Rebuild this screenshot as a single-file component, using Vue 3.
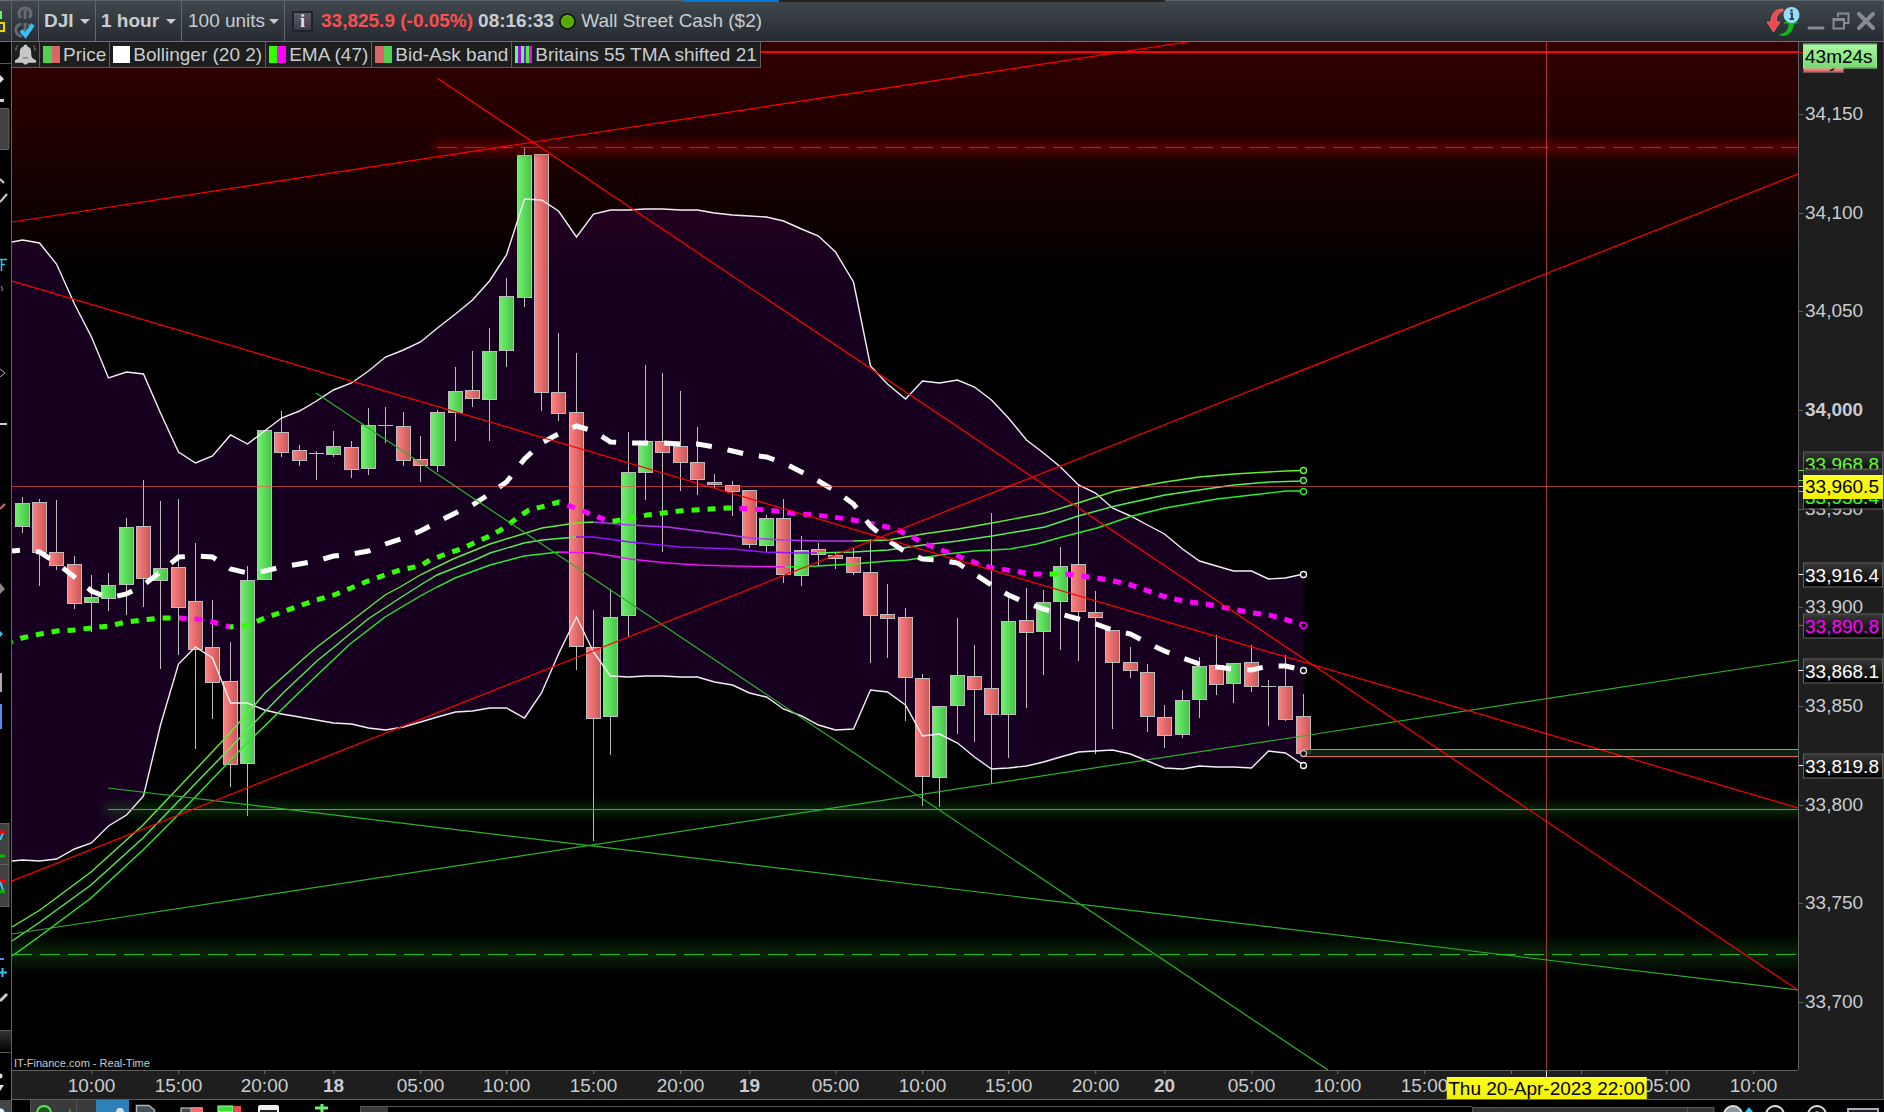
<script setup>
// Plot space: x 12..1798, y 42..1070
const PLOT = { x: 12, y: 42, w: 1786, h: 1028 }
const barX = (i) => Math.round(22.3 + 17.31 * i - 0.5) + 0.5
const priceY = (p) => 410 + (34000 - p) * 1.9733
const topPct = (y) => ((y - PLOT.y) / PLOT.h) * 100 + '%'
const leftPct = (x) => ((x - PLOT.x) / PLOT.w) * 100 + '%'

// direction, body top, body bottom, wick top, wick bottom
const raw = `u 503 526 497 533|d 502 552 499 586|d 552 565 500 570|d 564 603 556 609|u 597 602 575 632|u 585 598 573 611|u 527 584 518 615|d 526 578 480 607|u 568 580 501 669|d 567 607 499 655|d 601 649 543 749|d 647 682 600 719|d 681 764 642 787|u 580 763 566 816|u 430 579 430 579|d 432 452 411 457|d 450 460 445 466|n 453 453 451 480|u 446 454 431 457|d 447 469 441 478|u 425 468 408 475|n 425 425 407 443|d 426 460 412 466|d 459 465 436 482|u 412 465 410 472|u 391 412 367 441|d 390 398 351 407|u 351 399 328 441|u 296 350 278 367|u 155 297 148 307|d 154 392 154 411|d 392 413 333 421|d 412 646 353 670|d 647 718 610 841|u 617 716 589 755|u 472 615 432 637|u 441 472 365 500|d 441 452 373 552|d 446 462 391 491|d 462 479 427 495|d 482 484 474 488|d 485 491 481 516|d 490 544 490 548|u 518 545 515 552|d 518 574 499 583|u 550 575 536 586|d 549 554 543 566|d 555 558 553 569|d 557 572 548 575|d 572 615 539 663|d 614 618 584 658|d 617 677 608 721|d 678 776 674 806|u 706 777 706 807|u 675 705 618 734|d 676 689 645 742|d 688 714 513 784|u 621 714 597 758|d 620 632 588 708|u 602 631 590 675|u 566 601 547 650|d 564 611 485 661|d 612 617 591 754|d 630 662 630 729|d 662 670 647 678|d 672 716 664 732|d 717 735 705 748|u 700 734 690 738|u 666 699 657 718|d 665 684 635 695|u 663 683 663 703|d 662 686 645 692|n 686 686 680 726|d 686 719 655 721|d 716 753 694 754`
const candles = raw.split('|').map((row, i) => {
  const [dir, ...v] = row.split(' ')
  const [o, c, hi, lo] = v.map(Number)
  return { x: barX(i), dir, o: o + 0.5, c: c + 0.5, hi, lo }
})

const upper = [240,243,264,304,337,378,372,374,413,452,463,456,435,444,431,418,411,401,390,383,371,357,350,342,328,314,300,281,255,199,200,211,237,214,210,210,209,209,210,210,213,215,216,217,221,229,236,252,282,366,384,399,381,383,380,387,400,418,440,453,467,485,493,508,516,525,534,549,561,566,571,571,579,578,574]
const lower = [860,861,859,849,843,826,815,796,725,664,647,658,703,703,710,714,717,720,723,724,728,730,727,722,717,712,711,708,708,718,693,654,617,652,676,677,676,676,677,677,682,685,693,697,709,716,725,730,729,690,692,705,736,734,743,757,769,768,766,762,757,752,751,750,754,761,768,769,766,767,767,768,751,753,765]
const middle = [550,552,563,577,591,598,594,585,572,557,556,557,569,573,571,567,564,561,556,554,551,544,538,531,522,513,505,494,482,459,443,434,426,431,442,443,443,443,444,444,447,451,455,457,463,472,481,491,504,526,540,552,559,560,563,574,585,595,603,609,614,619,624,630,634,643,651,658,664,667,669,670,666,666,670]
const series = (arr, first) => `12,${first} ` + arr.map((y, i) => `${barX(i)},${y}`).join(' ')
const upperPts = series(upper, 242)
const lowerPts = series(lower, 861)
const middlePts = series(middle, 551)
const bandPts = upperPts + ' ' + lowerPts.split(' ').reverse().join(' ')

const emaPts = '12,642 22,638 40,634 57,631 74,630 91,628 109,626 126,622 143,620 161,618 179,618 196,619 213,622 230,627 248,625 265,618 282,612 299,606 316,600 334,595 351,588 368,581 385,575 400,570 420,566 430,560 446,554 461,549 476,542 490,536 504,528 517,518 529,510 545,506 559,502 578,509 593,515 608,521 615,521 631,518 647,515 663,513 679,511 694,510 711,509 727,508 737,508 752,509 768,510 784,512 800,514 816,515 832,517 848,519 863,522 879,525 895,529 909,535 923,543 938,549 953,554 968,560 984,566 999,569 1015,571 1031,574 1048,574 1066,574 1081,576 1097,578 1113,581 1128,584 1143,589 1159,595 1174,599 1190,602 1206,604 1222,607 1237,610 1253,613 1269,615 1284,619 1303,625'

const bands = [
  { id: 'a', pts: '12,927 40,910 91,872 143,825 198,767 230,733 265,693 302,660 317,647 350,622 385,595 400,587 422,574 453,559 490,544 542,528 576,523 593,522 630,525 667,527 715,533 750,538 783,540 817,541 853,541 888,540 923,534 958,529 992,523 1045,513 1078,503 1115,491 1165,482 1199,477 1234,474 1286,471 1303,470.5' },
  { id: 'b', pts: '12,941 40,922 91,885 143,838 196,783 230,748 283,693 318,660 333,648 368,619 400,598 422,584 437,575 477,559 490,553 524,543 542,540 576,537 593,537 630,542 680,547 733,549 763,552 800,553 817,553 853,552 888,550 923,545 958,541 992,536 1045,527 1078,516 1115,506 1165,495 1199,490 1234,485 1269,482 1303,481' },
  { id: 'c', pts: '12,956 40,936 91,898 143,850 177,816 245,745 312,680 350,644 385,617 400,608 422,595 437,587 455,578 490,565 524,556 559,552 593,553 613,556 630,559 667,563 698,565 733,566 785,567 817,566 853,564 888,561 907,560 947,554 974,551 992,550 1010,549 1037,544 1062,537 1097,528 1132,516 1165,508 1217,499 1269,493 1286,491 1303,491' },
]
// hard colour changes along x, as [x, colour before, colour after]
const gradients = [
  { id: 'stroke-a', steps: [[593, '#62f02e', '#b038f0'], [853, '#b038f0', '#62f02e']] },
  { id: 'stroke-b', steps: [[576, '#50f050', '#9010ff'], [817, '#9010ff', '#50f050']] },
  { id: 'stroke-c', steps: [[559, '#28ee28', '#f010f8'], [785, '#f010f8', '#28ee28']] },
  { id: 'stroke-ema', steps: [[179, '#33ff00', '#ff00ff'], [230, '#ff00ff', '#33ff00'], [559, '#33ff00', '#ff00ff'], [611, '#ff00ff', '#33ff00'], [732, '#33ff00', '#ff00ff'], [1044, '#ff00ff', '#33ff00'], [1060, '#33ff00', '#ff00ff']] },
]
const stopAt = (x) => (x - PLOT.x) / PLOT.w

const markers = [
  { y: 470.5, c: '#66ff33' }, { y: 480.5, c: '#55f055' }, { y: 491.5, c: '#28ee28' }, { y: 574.5, c: '#fff' },
  { y: 625.5, c: '#ff00ff' }, { y: 670.5, c: '#fff' }, { y: 753.5, c: '#bbb' }, { y: 765.5, c: '#fff' },
]

const scale = [34150, 34100, 34050, 34000, 33950, 33900, 33850, 33800, 33750, 33700].map((p) => ({
  text: p.toLocaleString('en-US'), y: priceY(p), major: p === 34000,
}))
const tags = [
  { text: '33,968.8', y: 464, tick: 470, c: '#66ff33' },
  { text: '33,958.4', y: 497, tick: 491, c: '#33ff33' },
  { text: '', y: 481, tick: 480, c: '#55f055' },
  { text: '33,916.4', y: 575, tick: 574, c: '#fff' },
  { text: '33,890.8', y: 626, tick: 625, c: '#ff00ff' },
  { text: '33,868.1', y: 671, tick: 670, c: '#fff' },
  { text: '33,819.8', y: 766, tick: 765, c: '#fff' },
]
const hours = [[4, '10:00'], [9, '15:00'], [14, '20:00'], [18, '18'], [23, '05:00'], [28, '10:00'], [33, '15:00'], [38, '20:00'], [42, '19'], [47, '05:00'], [52, '10:00'], [57, '15:00'], [62, '20:00'], [66, '20'], [71, '05:00'], [76, '10:00'], [81, '15:00'], [86, ''], [90, ''], [95, '05:00'], [100, '10:00']]
  .map(([i, text]) => ({ x: barX(i), text, day: text.length === 2 }))

const legend = [
  { text: 'Price', sw: 'price' }, { text: 'Bollinger (20 2)', sw: 'boll' }, { text: 'EMA (47)', sw: 'ema' },
  { text: 'Bid-Ask band', sw: 'bidask' }, { text: 'Britains 55 TMA shifted 21', sw: 'tma' },
]
</script>

<template>
  <div class="shell">
    <aside class="rail" aria-label="Drawing tools">
      <svg viewBox="0 0 12 1112" width="12" height="1112" aria-hidden="true">
        <defs>
          <linearGradient id="railTop" x2="0" y2="1"><stop stop-color="#40484e" /><stop offset="1" stop-color="#252b30" /></linearGradient>
          <linearGradient id="railLow" x2="0" y2="1"><stop stop-color="#333" /><stop offset="1" stop-color="#000" /></linearGradient>
        </defs>
        <rect width="12" height="41" fill="url(#railTop)" />
        <path d="M0 .5H12M0 41.5H12" stroke="#6a7075" />
        <rect y="11" width="2" height="8" fill="#6cf06c" /><rect y="19" width="7" height="14" fill="#343a3f" />
        <path d="M0 23H4V31H0" fill="none" stroke="#e8d800" stroke-width="2" />
        <path d="M0 63.500H12M0 1030.500H12M0 1052.500H12" stroke="#555" />
        <path d="M0 75L4 79L0 83Z" fill="#ddd" /><rect y="99" width="4" height="3" fill="#ccc" />
        <rect x="-2" y="108.500" width="11" height="41" rx="1" fill="#424242" stroke="#606060" />
        <path d="M0 179L4 183M0 202L7 194" stroke="#ccc" stroke-width="2" />
        <path d="M0 259.500H7M1.500 259V271M1 264.500H5" fill="none" stroke="#3bc0f0" stroke-width="1.500" />
        <path d="M1 286Q3 288 2 291M0 369L5 373L0 377" fill="none" stroke="#aaa" />
        <path d="M0 424H7" stroke="#ccc" stroke-width="2" /><path d="M0 509L5 504" stroke="#e06060" stroke-width="2" />
        <path d="M0 583L5 589L0 594Z" fill="#888" /><path d="M0 631L3 634L0 637Z" fill="#3bc0f0" />
        <rect y="673" width="2" height="19" fill="#aaa" /><rect y="704" width="2" height="25" fill="#5a8ae8" />
        <rect x="-2" y="823.500" width="11" height="41" fill="#424242" stroke="#606060" />
        <rect x="-2" y="864.500" width="11" height="42" fill="#424242" stroke="#606060" />
        <path d="M0 840L3 833M0 881L3 890" stroke="#3bc0f0" stroke-width="2" />
        <path d="M0 832H5M0 880L5 882" stroke="#f00" stroke-width="3" /><path d="M0 856H5M0 892L5 891" stroke="#0b0" stroke-width="3" />
        <path d="M0 959H4" stroke="#5a8ae8" stroke-width="2" /><path d="M2.500 968V977M0 972.500H7" stroke="#3bc0f0" stroke-width="2" />
        <path d="M0 1001L7 994" stroke="#ccc" stroke-width="3" />
        <rect y="1031" width="12" height="21" fill="url(#railLow)" />
        <circle cy="1076" r="2.500" fill="#ddd" /><path d="M0 1085H4L0 1091Z" fill="#ddd" />
        <rect y="1100" width="12" height="12" fill="#444" /><circle cy="1113" r="5" fill="#fff" stroke="#268" stroke-width="1" />
      </svg>
    </aside>

    <div class="window">
      <header class="bar">
        <span class="cell link" aria-hidden="true">
          <svg viewBox="0 0 26 40" width="26" height="40">
            <path d="M9 16.500A6 5.500 0 1 1 17 16.500M13 9V18" fill="none" stroke="#666b6f" stroke-width="3" />
            <path d="M9.500 23A6 6 0 0 0 10 35M16 23.500A6 6 0 0 1 18 25M13 22V31" fill="none" stroke="#666b6f" stroke-width="3" />
            <path d="M9 29.500L13.500 34.500L21 23.500" fill="none" stroke="#35c3f8" stroke-width="4" />
          </svg>
        </span>
        <label class="cell pick symbol"><select aria-label="Instrument"><option>DJI</option></select><i class="caret" /></label>
        <label class="cell pick frame"><select aria-label="Timeframe"><option>1 hour</option></select><i class="caret" /></label>
        <label class="cell pick units"><select aria-label="History"><option>100 units</option></select><i class="caret" /></label>
        <div class="quote">
          <button class="info" type="button" aria-label="Information">i</button>
          <b class="down">33,825.9 (-0.05%)</b>
          <b>08:16:33</b>
          <i class="live" />
          <span>Wall Street Cash ($2)</span>
        </div>
        <div class="controls">
          <button type="button" aria-label="Refresh">
            <svg viewBox="0 0 34 34" width="34" height="34">
              <path d="M17 5C9 5 5 10 5 18H1L7.500 28L14 18H10.500C10 12 12 9 17 7Z" fill="#f04848" stroke="#ff8080" stroke-width=".7" />
              <path d="M12 30.500C18 34 27 31 28 19.500H31.500V18H18V19.500H22.500C23 26 19 30 12 30.500Z" fill="#10b818" />
              <circle cx="25.500" cy="11" r="8" fill="#9adcf8" /><path d="M24 9.500H26V15M23.500 15H28" fill="none" stroke="#345" stroke-width="2" /><circle cx="25.500" cy="6.500" r="1.300" fill="#345" />
            </svg>
          </button>
          <button type="button" aria-label="Minimise"><svg viewBox="0 0 18 18" width="18" height="18"><path d="M2 16H16" stroke="#858b90" stroke-width="3" stroke-linecap="round" /></svg></button>
          <button type="button" aria-label="Restore"><svg viewBox="0 0 18 18" width="18" height="18"><path d="M6 5V1.500H16.500V11H13M1.500 7H12V16.500H1.500ZM1.500 8H12" fill="none" stroke="#858b90" stroke-width="2" /></svg></button>
          <button type="button" aria-label="Close"><svg viewBox="0 0 18 18" width="18" height="18"><path d="M2 2L16 16M16 2L2 16" stroke="#858b90" stroke-width="4" stroke-linecap="round" /></svg></button>
        </div>
        <i class="progress" />
      </header>

      <main class="board">
        <section class="plot">
          <svg class="chart" viewBox="12 42 1786 1028" preserveAspectRatio="none" role="img" aria-label="DJI hourly candles">
            <defs>
              <linearGradient id="sky" x2="0" y2="1"><stop stop-color="#320000" /><stop offset=".5" stop-color="#1c0000" /><stop offset="1" stop-color="#000" /></linearGradient>
              <linearGradient id="up"><stop stop-color="#70f070" /><stop offset="1" stop-color="#48c448" /></linearGradient>
              <linearGradient id="dn"><stop stop-color="#fb8282" /><stop offset="1" stop-color="#cc5757" /></linearGradient>
              <linearGradient id="redGlow" x2="0" y2="1"><stop stop-color="#c00000" stop-opacity="0" /><stop offset=".5" stop-color="#c00000" stop-opacity=".34" /><stop offset="1" stop-color="#c00000" stop-opacity="0" /></linearGradient>
              <linearGradient id="greenGlow" x2="0" y2="1"><stop stop-color="#28a028" stop-opacity="0" /><stop offset=".5" stop-color="#28a028" stop-opacity=".22" /><stop offset="1" stop-color="#28a028" stop-opacity="0" /></linearGradient>
              <linearGradient id="fadeIn" gradientUnits="userSpaceOnUse" x1="426" y1="0" x2="440" y2="0"><stop stop-color="#000" /><stop offset="1" stop-color="#fff" /></linearGradient>
              <linearGradient id="fadeInLow" gradientUnits="userSpaceOnUse" x1="98" y1="0" x2="112" y2="0"><stop stop-color="#000" /><stop offset="1" stop-color="#fff" /></linearGradient>
              <mask id="soft"><rect x="426" y="130" width="1372" height="34" fill="url(#fadeIn)" /></mask>
              <mask id="softLow"><rect x="98" y="790" width="1700" height="40" fill="url(#fadeInLow)" /></mask>
              <linearGradient v-for="g in gradients" :id="g.id" :key="g.id" gradientUnits="userSpaceOnUse" x1="12" y1="0" x2="1798" y2="0">
                <template v-for="s in g.steps" :key="s[0]">
                  <stop :offset="stopAt(s[0])" :stop-color="s[1]" />
                  <stop :offset="stopAt(s[0])" :stop-color="s[2]" />
                </template>
              </linearGradient>
            </defs>
            <rect x="12" y="42" width="1786" height="235" fill="url(#sky)" />
            <polygon :points="bandPts" fill="#9000be" fill-opacity=".16" />

            <g v-for="(k, i) in candles" :key="i" stroke="#bdbdbd">
              <line :x1="k.x" :x2="k.x" :y1="k.hi" :y2="k.lo" />
              <line v-if="k.dir === 'n'" :x1="k.x - 7.5" :x2="k.x + 7.5" :y1="k.o" :y2="k.o" />
              <rect v-else :x="k.x - 7" :y="k.o" width="14" :height="k.c - k.o" :fill="k.dir === 'u' ? 'url(#up)' : 'url(#dn)'" />
            </g>

            <rect x="426" y="135" width="1372" height="25" fill="url(#redGlow)" mask="url(#soft)" />
            <rect x="98" y="797" width="1700" height="25" fill="url(#greenGlow)" mask="url(#softLow)" />
            <rect x="12" y="934" width="1786" height="40" fill="url(#greenGlow)" />
            <rect x="1303" y="749" width="495" height="8" fill="#0c2c10" fill-opacity=".8" />

            <g fill="none">
              <g stroke="#f4eef6" stroke-width="1.4"><polyline :points="upperPts" /><polyline :points="lowerPts" /></g>
              <polyline v-for="b in bands" :key="b.id" :points="b.pts" :stroke="`url(#stroke-${b.id})`" stroke-width="1.4" />
              <polyline :points="emaPts" stroke="url(#stroke-ema)" stroke-width="5" stroke-dasharray="8 8" stroke-dashoffset="7" />
              <polyline :points="middlePts" stroke="#fff" stroke-width="5" stroke-dasharray="16 16" stroke-dashoffset="8" />
              <g stroke="#2cb02c">
                <path d="M316 393L1328 1070M108 788L1798 990M12 934L1798 660" stroke-width="1.2" />
                <path d="M108 809.500H1798M12 954.500" stroke="#2fb82f" /><path d="M12 954.500H1798" stroke="#2fb82f" stroke-dasharray="20 8" />
              </g>
              <g stroke="#ff0000">
                <path d="M12 222L1187 42M437 78L1798 990M12 281L1798 808M12 881L1798 174" stroke-width="1.2" />
                <path d="M437 147.500H1798" stroke-dasharray="20 8" /><path d="M12 52H1798" stroke-width="2" />
              </g>
              <path d="M1303 749.500H1798" stroke="#4ccc4c" /><path d="M1303 756.500H1798" stroke="#e06464" />
              <path d="M12 486.500H1798M1546.500 42V1070" stroke="#f05050" stroke-opacity=".65" />
            </g>
            <circle v-for="m in markers" :key="m.y" cx="1303.500" :cy="m.y" r="3" fill="#000" :stroke="m.c" stroke-width="1.300" />
          </svg>

          <div class="legend">
            <button class="item bell" type="button" aria-label="Alerts">
              <svg viewBox="0 0 24 24" width="24" height="24"><path d="M12 1C13 1 14 2 14 3C18 4 18 8 18 11C18 15 20 16 23 17.500V20H15L13 22H11L9 20H1V17.500C4 16 6 15 6 11C6 8 6 4 10 3C10 2 11 1 12 1Z" fill="#c8c8c8" /><path d="M9 15H15" stroke="#666" /><path d="M2 7Q2 4 4 2M22 7Q22 4 20 2" fill="none" stroke="#bbb" stroke-dasharray="2 1" /></svg>
            </button>
            <span v-for="l in legend" :key="l.text" class="item"><i class="swatch" :class="l.sw" />{{ l.text }}</span>
          </div>
          <small class="credit">IT-Finance.com - Real-Time</small>
        </section>

        <aside class="prices">
          <span v-for="s in scale" :key="s.text" class="level" :class="{ major: s.major }" :style="{ top: topPct(s.y) }">{{ s.text }}</span>
          <template v-for="t in tags" :key="t.y">
            <i class="notch" :style="{ top: topPct(t.tick), background: t.c }" />
            <span class="tag" :style="{ top: topPct(t.y), color: t.c }">{{ t.text }}</span>
          </template>
          <i class="notch" :style="{ top: topPct(486) }" />
          <span class="tag cursor" :style="{ top: topPct(487) }">33,960.5</span>
          <i class="notch resist" :style="{ top: topPct(52) }" />
          <span class="tag day" :style="{ top: topPct(60) }">Day</span>
          <span class="tag timer" :style="{ top: topPct(56) }">43m24s</span>
        </aside>

        <div class="times">
          <span v-for="h in hours" :key="h.x" class="hour" :class="{ major: h.day }" :style="{ left: leftPct(h.x) }">{{ h.text }}</span>
          <i class="stem" :style="{ left: leftPct(1546) }" />
          <span class="when" :style="{ left: leftPct(1546.5) }">Thu 20-Apr-2023 22:00</span>
        </div>
        <div class="corner" />
      </main>

      <footer class="dock" aria-hidden="true">
        <svg class="tools" viewBox="12 1100 480 12" width="480" height="12">
          <rect x="30" y="1100" width="66" height="12" fill="#3a3a3a" /><path d="M30.500 1100V1112M76.500 1100V1112" stroke="#555" />
          <circle cx="44" cy="1113" r="7" fill="#155a15" stroke="#5fe05f" stroke-width="2" /><path d="M70 1109V1112" stroke="#3c3" />
          <rect x="96" y="1100" width="33" height="12" fill="#2c82b8" /><circle cx="120" cy="1112" r="4" fill="#ddd" />
          <path d="M136.500 1113V1105.500H149L154.500 1110V1113" fill="#465058" stroke="#aab4bc" stroke-width="1.500" />
          <rect x="181" y="1108" width="10" height="5" fill="#444" stroke="#ddd" /><rect x="191" y="1107" width="12" height="5" fill="#f07070" />
          <rect x="218" y="1106" width="15" height="6" fill="#38e038" stroke="#aaffaa" /><rect x="234" y="1106" width="7" height="6" fill="#e05050" />
          <path d="M258 1112V1107Q258 1105 260 1105H277Q279 1105 279 1107V1112Z" fill="#eee" /><rect x="260" y="1110" width="17" height="3" fill="#222" />
          <path d="M315 1108H328M322 1104V1112" stroke="#6cf06c" stroke-width="3" />
          <rect x="360" y="1106" width="28" height="6" fill="#3a3a3a" /><path d="M360.500 1112V1106.500H492" fill="none" stroke="#555" />
        </svg>
        <i class="track" />
        <svg class="zooms" viewBox="1472 1100 412 12" width="412" height="12">
          <path d="M1472.500 1112V1107.500H1714V1112M1687.500 1107V1112" fill="#333" stroke="#555" />
          <circle cx="1733" cy="1115" r="9" fill="#8c949a" stroke="#ddd" stroke-width="2" /><path d="M1745 1112L1749 1107L1753 1112Z" fill="#3bc0f0" />
          <circle cx="1775" cy="1115" r="9" fill="#111" stroke="#ddd" stroke-width="2" /><circle cx="1817" cy="1115" r="9" fill="#111" stroke="#ddd" stroke-width="2" /><circle cx="1817" cy="1113" r="2" fill="#3bc0f0" />
          <path d="M1848 1112V1109H1878V1112" fill="#222" stroke="#aab" stroke-width="2" />
        </svg>
      </footer>
    </div>
  </div>
</template>

<style>
html, body { background: #000; }
</style>

<style scoped>
* { box-sizing: border-box; }
.shell {
  display: flex;
  min-height: 100vh;
  overflow: hidden;
  color: #c8ccd0;
  background: #000;
  font: 19px/24px "Liberation Sans", Arial, sans-serif;
}
button { padding: 0; border: 0; background: none; color: inherit; font: inherit; }
svg { display: block; }
.rail { flex: none; width: 12px; height: 100vh; overflow: hidden; border-right: 1px solid #606468; }
.window { flex: 1; min-width: 0; display: flex; flex-direction: column; }

.bar {
  position: relative;
  display: flex;
  height: 42px;
  border-top: 1px solid #5d656c;
  border-bottom: 1px solid #6a7075;
  border-right: 1px solid #555;
  background: linear-gradient(#40484e, #252b30);
}
.cell { display: flex; align-items: center; border-right: 1px solid #61676c; }
.link { width: 27px; }
.pick { position: relative; }
.pick select {
  appearance: none;
  width: 100%;
  height: 40px;
  padding: 0 0 0 5px;
  border: 0;
  background: none;
  color: inherit;
  font: inherit;
}
.symbol { width: 57px; }
.frame { width: 86px; }
.units { width: 103px; }
.pick.units select { padding-left: 6px; }
.symbol select, .frame select { font-weight: bold; }
.caret {
  position: absolute;
  right: 5px;
  top: 18px;
  border: 5px solid transparent;
  border-top-color: #c8ccd0;
  border-bottom: 0;
  pointer-events: none;
}
.quote { display: flex; align-items: center; gap: 5px; padding-left: 7px; white-space: nowrap; }
.down { color: #f85050; }
.info {
  width: 21px;
  height: 21px;
  margin-right: 3px;
  border: 2px solid #22222c;
  background: linear-gradient(#5c5c68, #3c3c48);
  color: #e4e4e4;
  font: bold 18px/16px "Liberation Serif", serif;
}
.live { width: 17px; height: 17px; border: 2px solid #15200c; border-radius: 50%; background: #55a800; box-shadow: inset 0 0 0 1px #78cc20; }
.controls { display: flex; align-items: center; gap: 7px; margin-left: auto; padding-right: 8px; }
.progress { position: absolute; top: -1px; left: 671px; width: 482px; height: 2px; background: linear-gradient(90deg, #0078d7 96px, #222 96px); }

.board { flex: 1; display: grid; grid-template-columns: minmax(0, 1fr) 86px; grid-template-rows: minmax(0, 1fr) 30px; }
.plot { position: relative; overflow: hidden; background: #000; }
.chart { position: absolute; width: 100%; height: 100%; }
.legend { position: relative; display: flex; width: max-content; height: 26px; background: #1e1e1e; border-bottom: 1px solid #606060; }
.item { display: flex; align-items: center; gap: 3px; padding: 0 3px; border-right: 1px solid #606060; white-space: nowrap; }
.bell { width: 28px; padding: 0 2px; }
.swatch { width: 17px; height: 17px; background: #fff; }
.price { background: linear-gradient(90deg, #50d050 50%, #dc6464 50%); }
.ema { background: linear-gradient(90deg, #33ff00 50%, #ff00ff 50%); }
.bidask { background: linear-gradient(90deg, #dc6464 50%, #50d050 50%); }
.tma { background: linear-gradient(90deg, #66ff66 3px, #a000ff 3px 6px, #66ff33 6px 9px, #8a10f8 9px 11px, #33ff33 11px 14px, #ff00ff 14px); }
.credit { position: absolute; left: 2px; bottom: 0; font-size: 11px; line-height: 13px; }

.prices { position: relative; border-left: 1px solid #606060; border-right: 1px solid #444; background: #1e1e1e; }
.level, .tag { position: absolute; transform: translateY(-50%); }
.level { left: 6px; }
.level::before { content: ""; position: absolute; left: -6px; top: 12px; width: 4px; height: 1px; background: #606060; }
.major { font-weight: bold; }
.tag {
  left: 4px;
  width: 80px;
  height: 25px;
  padding-left: 1px;
  border: 1px solid #606060;
  background: linear-gradient(#383838, #000);
}
.notch { position: absolute; left: 0; width: 4px; height: 1px; background: #ddd; }
.resist { background: #f00; }
.cursor { height: 24px; border: 0; padding-left: 2px; background: linear-gradient(#ffff20, #f0f000); color: #000; }
.day { width: 41px; background: #f07878; color: #000; }
.timer { width: 74px; border-color: #90e890; background: linear-gradient(#a8f8a0, #78d870); color: #000; }

.times { position: relative; overflow: hidden; border-top: 1px solid #606060; border-bottom: 1px solid #606060; background: #1e1e1e; }
.hour { position: absolute; top: 3px; transform: translateX(-50%); }
.hour::before { content: ""; position: absolute; left: 50%; top: -3px; width: 1px; height: 3px; background: #707070; }
.stem { position: absolute; top: 0; width: 1px; height: 6px; background: #ddd; }
.when {
  position: absolute;
  top: 6px;
  height: 22px;
  padding: 0 2px;
  transform: translateX(-50%);
  background: linear-gradient(#ffff20, #f0f000);
  color: #000;
  white-space: nowrap;
}
.corner { background: #1e1e1e; border-right: 1px solid #444; border-bottom: 1px solid #606060; }
.dock { display: flex; height: 12px; overflow: hidden; background: #000; }
.tools, .zooms { flex: none; }
.track { flex: 1; margin-top: 6px; border-top: 1px solid #555; }
</style>
